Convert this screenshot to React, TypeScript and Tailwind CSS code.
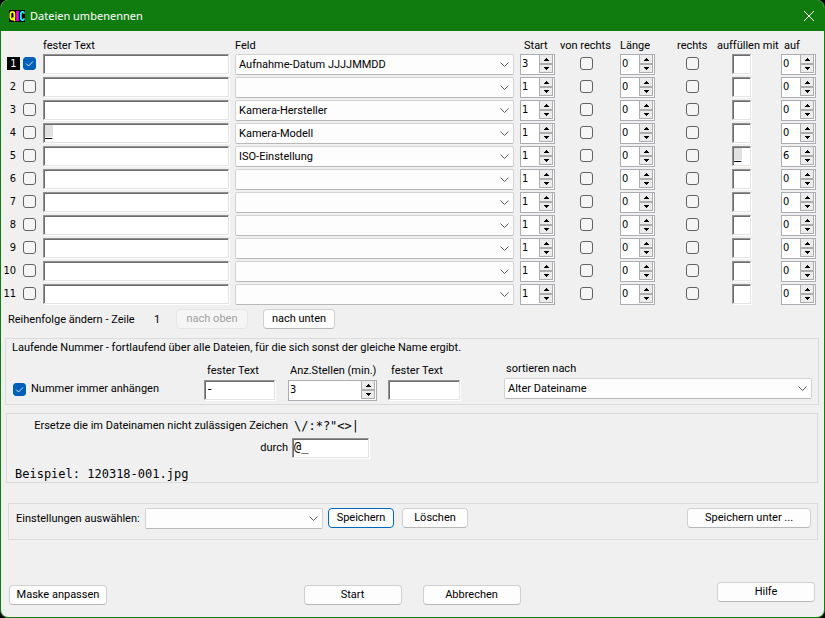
import { useId } from "react";

const FIELDS = [
  "",
  "Aufnahme-Datum JJJJMMDD",
  "Kamera-Hersteller",
  "Kamera-Modell",
  "ISO-Einstellung",
];

type RowData = {
  active?: boolean;
  text?: string;
  field?: string;
  start: number;
  fill?: string;
  fillTo: number;
};

const ROWS: RowData[] = [
  { active: true, field: "Aufnahme-Datum JJJJMMDD", start: 3, fillTo: 0 },
  { start: 1, fillTo: 0 },
  { field: "Kamera-Hersteller", start: 1, fillTo: 0 },
  { text: "_", field: "Kamera-Modell", start: 1, fillTo: 0 },
  { field: "ISO-Einstellung", start: 1, fill: "_", fillTo: 6 },
  { start: 1, fillTo: 0 },
  { start: 1, fillTo: 0 },
  { start: 1, fillTo: 0 },
  { start: 1, fillTo: 0 },
  { start: 1, fillTo: 0 },
  { start: 1, fillTo: 0 },
];

const COLUMNS =
  "grid grid-cols-[16px_22px_minmax(0,192fr)_minmax(0,285fr)_40px_60px_57px_40px_64px_35px]";

function CheckBox({ id, label, checked = false }: { id?: string; label?: string; checked?: boolean }) {
  return (
    <span className="relative block h-[13px] w-[13px] shrink-0">
      <input
        id={id}
        type="checkbox"
        aria-label={label}
        defaultChecked={checked}
        className="peer block h-[13px] w-[13px] appearance-none rounded-[3px] border border-[#626262] bg-[#f5f5f5] checked:border-[#005fb8] checked:bg-[#005fb8]"
      />
      <svg
        viewBox="0 0 13 13"
        className="pointer-events-none absolute inset-0 hidden h-[13px] w-[13px] peer-checked:block"
        fill="none"
        stroke="#d8e8f6"
        strokeWidth="1"
      >
        <path d="M3 6.5 5.5 9 10 4.5" />
      </svg>
    </span>
  );
}

function TextBox({
  id,
  label,
  value = "",
  marked = false,
  className = "",
}: {
  id?: string;
  label?: string;
  value?: string;
  marked?: boolean;
  className?: string;
}) {
  const mark = marked
    ? "bg-[linear-gradient(#e1e1e1,#e1e1e1)] bg-[length:8px_12px] bg-no-repeat font-bold"
    : "";
  return (
    <input
      id={id}
      type="text"
      aria-label={label}
      defaultValue={value}
      className={`block h-5 min-w-0 border border-t-[#929292] border-r-[#e3e3e3] border-b-[#e3e3e3] border-l-[#929292] bg-white bg-origin-content pt-px pb-[3px] pl-px font-['DejaVu_Sans_Mono',monospace] text-xs leading-[14px] shadow-[inset_1px_1px_0_#6c6c6c,1px_1px_0_#ffffff] outline-none ${mark} ${className}`}
    />
  );
}

function Spinner({
  id,
  label,
  value,
  className = "w-[35px]",
}: {
  id?: string;
  label?: string;
  value: number;
  className?: string;
}) {
  return (
    <span className={`flex h-[21px] border border-[#abadb3] bg-white pr-px ${className}`}>
      <input
        id={id}
        type="text"
        inputMode="numeric"
        aria-label={label}
        defaultValue={value}
        className="block h-[17px] w-0 min-w-0 flex-1 bg-transparent pl-px font-['DejaVu_Sans_Condensed',sans-serif] leading-4 outline-none"
      />
      <span className="flex h-[18px] w-[14px] shrink-0 flex-col">
        <button
          type="button"
          aria-label="Mehr"
          className="flex h-[9px] items-center justify-center border-r border-b border-l border-[#adadad] bg-[#ececec]"
        >
          <svg viewBox="0 0 5 3" className="h-[3px] w-[5px]" shapeRendering="crispEdges">
            <path d="M2 0h1v1h1v1h1v1H0V2h1V1h1z" fill="#000" />
          </svg>
        </button>
        <button
          type="button"
          aria-label="Weniger"
          className="flex h-[9px] items-center justify-center border border-[#adadad] bg-[#ececec]"
        >
          <svg viewBox="0 0 5 3" className="h-[3px] w-[5px]" shapeRendering="crispEdges">
            <path d="M0 0h5v1H4v1H3v1H2V2H1V1H0z" fill="#000" />
          </svg>
        </button>
      </span>
    </span>
  );
}

function ComboBox({
  id,
  label,
  value,
  options,
  className = "",
}: {
  id?: string;
  label?: string;
  value: string;
  options: string[];
  className?: string;
}) {
  return (
    <span className={`relative block ${className}`}>
      <select
        id={id}
        aria-label={label}
        defaultValue={value}
        className="block h-[21px] w-full appearance-none rounded-xs border border-[#d2d2d2] border-b-[#b8b8b8] bg-[#fdfdfd] pt-px pr-6 pl-[3px] outline-none"
      >
        {options.map((option) => (
          <option key={option}>{option}</option>
        ))}
      </select>
      <svg
        viewBox="0 0 9 5"
        className="pointer-events-none absolute top-2 right-[5px] h-[5px] w-[9px]"
        fill="none"
        stroke="#555"
      >
        <path d="M.5.5l4 4 4-4" />
      </svg>
    </span>
  );
}

function PushButton({
  children,
  className = "",
  primary = false,
  disabled = false,
}: {
  children: string;
  className?: string;
  primary?: boolean;
  disabled?: boolean;
}) {
  const tone = disabled
    ? "border-[#e6e6e6] bg-[#f5f5f5] text-[#a0a0a0]"
    : primary
      ? "border-[#0067c0] bg-[#fdfdfd]"
      : "border-[#d0d0d0] border-b-[#b8b8b8] bg-[#fdfdfd]";
  return (
    <button
      type="button"
      disabled={disabled}
      className={`flex h-5 shrink-0 items-center justify-center rounded-sm border whitespace-nowrap ${tone} ${className}`}
    >
      {children}
    </button>
  );
}

function Logo() {
  return (
    <svg viewBox="0 0 16 12" className="h-3 w-4" fill="none" strokeWidth="1.8">
      <rect width="16" height="12" fill="#000" />
      <rect x="1.4" y="1.9" width="4" height="7.6" rx="2" stroke="#ff0" />
      <path d="M3.5 7.5 6 11" stroke="#ff0" />
      <path d="M8.5 1v10" stroke="#f0f" strokeWidth="2.6" />
      <path d="M15.2 3.6c-.4-2.4-3.4-2.4-3.4.6v3.6c0 3 3 3 3.4.6" stroke="#0ff" />
    </svg>
  );
}

function RuleRow({ row, number }: { row: RowData; number: number }) {
  return (
    <div className={`${COLUMNS} h-[23px] items-start`}>
      <span
        className={
          row.active
            ? "mt-[3px] ml-[2px] h-[13px] w-[13px] bg-black text-center font-['DejaVu_Sans_Condensed',sans-serif] leading-[13px] text-white"
            : "mt-[3px] flex justify-end pr-[5px] font-['DejaVu_Sans_Condensed',sans-serif] leading-[14px]"
        }
      >
        {number}
      </span>
      <span className="pt-[3px] pl-[2px]">
        <CheckBox label={`Zeile ${number}`} checked={row.active} />
      </span>
      <TextBox
        label={`fester Text ${number}`}
        value={row.text}
        marked={row.text !== undefined}
        className="mr-[6px]"
      />
      <ComboBox
        label={`Feld ${number}`}
        value={row.field ?? ""}
        options={FIELDS}
        className="mr-[6px]"
      />
      <Spinner label={`Start ${number}`} value={row.start} />
      <span className="flex justify-center pt-[3px] pr-[7px]">
        <CheckBox label={`von rechts ${number}`} />
      </span>
      <Spinner label={`Länge ${number}`} value={0} />
      <span className="flex justify-center pt-[3px] pr-[9px]">
        <CheckBox label={`rechts ${number}`} />
      </span>
      <TextBox
        label={`auffüllen mit ${number}`}
        value={row.fill}
        marked={row.fill !== undefined}
        className="ml-[15px] w-[19px]"
      />
      <Spinner label={`auf ${number}`} value={row.fillTo} />
    </div>
  );
}

export default function App() {
  const id = useId();
  return (
    <div className="min-h-screen bg-black font-['Roboto',sans-serif] text-[11px] leading-[14px] text-black">
      <main className="flex min-h-screen flex-col overflow-hidden rounded-lg border-x border-b border-[#107c10] bg-[#f0f0f0]">
        <header className="flex h-[31px] shrink-0 items-center bg-[#107c10] pr-[10px] pl-2 text-white">
          <Logo />
          <h1 className="ml-[5px] flex-1 font-['Noto_Sans',sans-serif] text-[11px]">
            Dateien umbenennen
          </h1>
          <button type="button" aria-label="Schließen">
            <svg viewBox="0 0 10 10" className="h-[10px] w-[10px]" stroke="#fff" fill="none">
              <path d="M0 0l10 10M10 0L0 10" />
            </svg>
          </button>
        </header>

        <section className="pr-2 pl-1">
          <div className={`${COLUMNS} h-[23px] items-center pt-[6px] whitespace-nowrap`}>
            <span className="col-start-3">fester Text</span>
            <span>Feld</span>
            <span className="pl-1">Start</span>
            <span>von rechts</span>
            <span>Länge</span>
            <span>rechts</span>
            <span>auffüllen mit</span>
            <span className="pl-[3px]">auf</span>
          </div>
          {ROWS.map((row, index) => (
            <RuleRow key={index} row={row} number={index + 1} />
          ))}
        </section>

        <section className="mt-[2px] flex items-center pl-[7px]">
          <span className="w-[146px] pt-px">Reihenfolge ändern - Zeile</span>
          <span className="w-[22px] pt-px">1</span>
          <PushButton disabled className="w-[72px]">
            nach oben
          </PushButton>
          <PushButton className="ml-[15px] w-[72px]">nach unten</PushButton>
        </section>

        <section className="mt-[9px] mr-[5px] ml-1 h-[67px] border border-[#dcdcdc] pt-[2px] pr-[6px] pl-[6px]">
          <p>Laufende Nummer - fortlaufend über alle Dateien, für die sich sonst der gleiche Name ergibt.</p>
          <div className="mt-[7px] flex items-end">
            <div className="mb-[5px] ml-px flex w-[191px] items-center gap-[5px]">
              <CheckBox id={`${id}-always`} checked />
              <label htmlFor={`${id}-always`}>Nummer immer anhängen</label>
            </div>
            <div className="flex w-[84px] flex-col gap-[2px] pb-px">
              <label htmlFor={`${id}-before`} className="pl-[3px]">
                fester Text
              </label>
              <TextBox id={`${id}-before`} value="-" className="w-[71px]" />
            </div>
            <div className="flex w-[100px] flex-col gap-[2px]">
              <label htmlFor={`${id}-digits`} className="pl-[2px] whitespace-nowrap">
                Anz.Stellen (min.)
              </label>
              <Spinner id={`${id}-digits`} value={3} className="w-[89px]" />
            </div>
            <div className="flex w-[116px] flex-col gap-[2px] pb-px">
              <label htmlFor={`${id}-after`} className="pl-[3px]">
                fester Text
              </label>
              <TextBox id={`${id}-after`} className="w-[72px]" />
            </div>
            <div className="flex flex-1 flex-col gap-[2px] pb-[2px]">
              <label htmlFor={`${id}-sort`} className="pl-[2px]">
                sortieren nach
              </label>
              <ComboBox
                id={`${id}-sort`}
                value="Alter Dateiname"
                options={["Alter Dateiname", "Aufnahme-Datum"]}
              />
            </div>
          </div>
        </section>

        <section className="mt-2 mr-[6px] ml-[5px] h-[70px] border border-[#dcdcdc] pt-1 pl-2">
          <div className="grid grid-cols-[273px_1fr] items-center gap-x-1">
            <span className="text-right">Ersetze die im Dateinamen nicht zulässigen Zeichen</span>
            <code className="pl-[2px] font-['DejaVu_Sans_Mono',monospace] text-xs leading-4">
              {'\\/:*?"<>|'}
            </code>
          </div>
          <div className="mt-1 grid grid-cols-[273px_1fr] items-center gap-x-1">
            <label htmlFor={`${id}-replace`} className="text-right">
              durch
            </label>
            <TextBox id={`${id}-replace`} value="@_" className="w-[77px]" />
          </div>
          <output className="mt-2 block font-['DejaVu_Sans_Mono',monospace] text-xs leading-4">
            Beispiel: 120318-001.jpg
          </output>
        </section>

        <section className="mt-5 mr-[6px] ml-[7px] flex h-[37px] items-start border border-[#dcdcdc] pt-1 pr-[6px] pl-[7px]">
          <label htmlFor={`${id}-preset`} className="w-[129px] pt-1 whitespace-nowrap">
            Einstellungen auswählen:
          </label>
          <ComboBox id={`${id}-preset`} value="" options={[""]} className="w-[178px]" />
          <PushButton primary className="ml-[5px] w-[66px]">
            Speichern
          </PushButton>
          <PushButton className="mr-auto ml-2 w-[66px]">Löschen</PushButton>
          <PushButton className="w-[124px]">Speichern unter ...</PushButton>
        </section>

        <footer className="mt-auto flex items-end pr-[9px] pb-3 pl-2">
          <PushButton className="w-[98px]">Maske anpassen</PushButton>
          <span className="flex-1" />
          <PushButton className="w-[98px]">Start</PushButton>
          <PushButton className="ml-[21px] w-[98px]">Abbrechen</PushButton>
          <span className="flex-1" />
          <PushButton className="mb-[3px] w-[98px]">Hilfe</PushButton>
        </footer>
      </main>
    </div>
  );
}
